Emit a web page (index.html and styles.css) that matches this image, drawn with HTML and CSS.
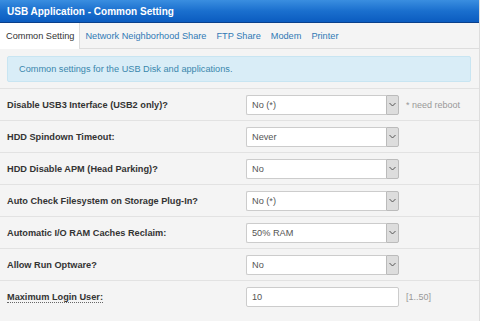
FILE: index.html
```html
<!DOCTYPE html>
<html lang="en">
<head>
    <meta charset="UTF-8">
    <meta name="viewport" content="width=device-width, initial-scale=1.0">
    <title>USB Application - Common Setting</title>
    <link rel="stylesheet" href="styles.css">
</head>
<body>
    <div class="panel">
        <div class="title">USB Application - Common Setting</div>
        <ul class="tabs">
            <li class="active">Common Setting</li>
            <li><a href="#">Network Neighborhood Share</a></li>
            <li><a href="#">FTP Share</a></li>
            <li><a href="#">Modem</a></li>
            <li><a href="#">Printer</a></li>
        </ul>
        <div class="info">Common settings for the USB Disk and applications.</div>
        <div class="rows">
            <div class="row">
                <label>Disable USB3 Interface (USB2 only)?</label>
                <div class="field">
                    <span class="select"><select><option>No (*)</option></select><span class="arrow"><svg width="7" height="5" viewBox="0 0 7 5"><path d="M0.5 1 L3.5 4 L6.5 1" fill="none" stroke="#555" stroke-width="1"/></svg></span></span>
                    <span class="hint">* need reboot</span>
                </div>
            </div>
            <div class="row">
                <label>HDD Spindown Timeout:</label>
                <div class="field">
                    <span class="select"><select><option>Never</option></select><span class="arrow"><svg width="7" height="5" viewBox="0 0 7 5"><path d="M0.5 1 L3.5 4 L6.5 1" fill="none" stroke="#555" stroke-width="1"/></svg></span></span>
                </div>
            </div>
            <div class="row">
                <label>HDD Disable APM (Head Parking)?</label>
                <div class="field">
                    <span class="select"><select><option>No</option></select><span class="arrow"><svg width="7" height="5" viewBox="0 0 7 5"><path d="M0.5 1 L3.5 4 L6.5 1" fill="none" stroke="#555" stroke-width="1"/></svg></span></span>
                </div>
            </div>
            <div class="row">
                <label>Auto Check Filesystem on Storage Plug-In?</label>
                <div class="field">
                    <span class="select"><select><option>No (*)</option></select><span class="arrow"><svg width="7" height="5" viewBox="0 0 7 5"><path d="M0.5 1 L3.5 4 L6.5 1" fill="none" stroke="#555" stroke-width="1"/></svg></span></span>
                </div>
            </div>
            <div class="row">
                <label>Automatic I/O RAM Caches Reclaim:</label>
                <div class="field">
                    <span class="select"><select><option>50% RAM</option></select><span class="arrow"><svg width="7" height="5" viewBox="0 0 7 5"><path d="M0.5 1 L3.5 4 L6.5 1" fill="none" stroke="#555" stroke-width="1"/></svg></span></span>
                </div>
            </div>
            <div class="row">
                <label>Allow Run Optware?</label>
                <div class="field">
                    <span class="select"><select><option>No</option></select><span class="arrow"><svg width="7" height="5" viewBox="0 0 7 5"><path d="M0.5 1 L3.5 4 L6.5 1" fill="none" stroke="#555" stroke-width="1"/></svg></span></span>
                </div>
            </div>
            <div class="row last">
                <label><span class="tip">Maximum Login User:</span></label>
                <div class="field">
                    <input type="text" value="10">
                    <span class="hint">[1..50]</span>
                </div>
            </div>
        </div>
    </div>
</body>
</html>
```

FILE: styles.css
```css
body {
    margin: 0;
    padding: 0;
    font-family: "Liberation Sans", Arial, sans-serif;
    font-size: 9.2px;
    color: #333;
    background-color: #f4f4f4;
}
.panel {
    width: 479px;
    min-height: 321px;
    border-right: 1px solid #ddd;
    background-color: #f4f4f4;
}
.title {
    height: 22px;
    line-height: 23px;
    padding-left: 7px;
    font-size: 10px;
    font-weight: bold;
    color: #fff;
    background: linear-gradient(to bottom, #3a8ee0 0%, #1a6fce 50%, #0b5cc0 100%);
    border-bottom: 1px solid #0a3f8a;
}
.tabs {
    list-style: none;
    margin: 0;
    padding: 0;
    height: 25px;
    display: flex;
    border-bottom: 1px solid #ddd;
    background-color: #f4f4f4;
}
.tabs li {
    padding: 0 5px 0 6px;
    line-height: 26px;
    margin-right: -1px;
}
.tabs li a {
    color: #3079b4;
    text-decoration: none;
}
.tabs li.active {
    background-color: #fff;
    border-right: 1px solid #ddd;
    margin-bottom: -1px;
    padding: 0 5px 0 6px;
    color: #333;
}
.info {
    margin: 7px 8px 0 7px;
    height: 24px;
    line-height: 24px;
    padding-left: 11px;
    background-color: #d9edf7;
    border: 1px solid #c8e5f2;
    border-radius: 2px;
    color: #3a87ad;
}
.rows {
    margin-top: 6px;
}
.row {
    display: flex;
    align-items: center;
    height: 31px;
    border-top: 1px solid #e2e2e2;
}
.row.last {
    height: 32px;
}
.row label {
    width: 239px;
    padding-left: 7px;
    font-weight: bold;
    color: #333;
}
.tip {
    border-bottom: 1px dotted #666;
}
.field {
    display: flex;
    align-items: center;
}
.select {
    display: flex;
    width: 153px;
    height: 20px;
}
.select select {
    appearance: none;
    -webkit-appearance: none;
    flex: 1;
    min-width: 0;
    height: 20px;
    margin: 0;
    padding: 0 5px;
    font-family: "Liberation Sans", Arial, sans-serif;
    font-size: 9.2px;
    color: #555;
    background-color: #fff;
    border: 1px solid #ccc;
    border-right: none;
    border-radius: 2px 0 0 2px;
    outline: none;
}
.arrow {
    width: 11px;
    height: 18px;
    display: flex;
    align-items: center;
    justify-content: center;
    background-color: #ddd;
    border: 1px solid #bbb;
    border-radius: 0 2px 2px 0;
}
.field input {
    box-sizing: border-box;
    width: 153px;
    height: 20px;
    margin: 0;
    padding: 0 5px;
    font-family: "Liberation Sans", Arial, sans-serif;
    font-size: 9.2px;
    color: #555;
    background-color: #fff;
    border: 1px solid #ccc;
    border-radius: 2px;
}
.hint {
    margin-left: 7px;
    font-size: 9px;
    color: #999;
}
```
